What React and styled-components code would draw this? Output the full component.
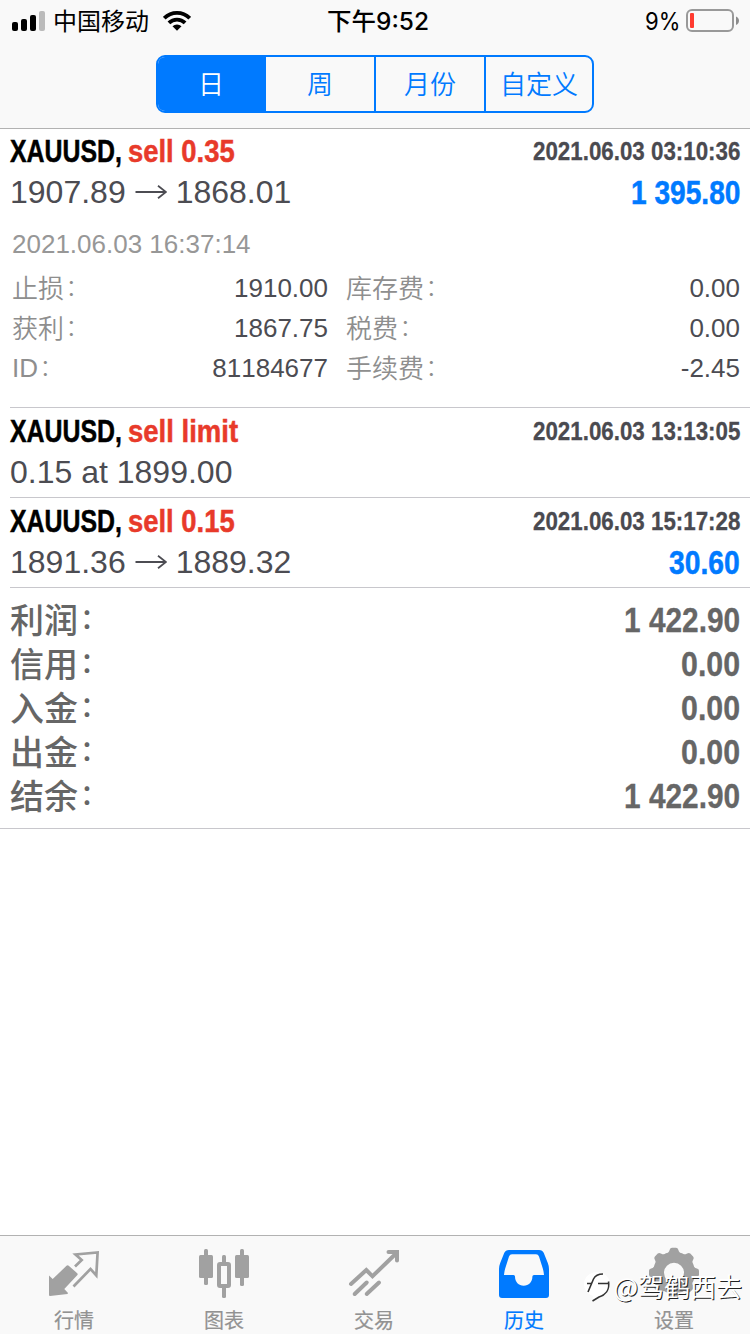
import { useLayoutEffect, useRef, useState } from "react";
import styled, { createGlobalStyle } from "styled-components";

const GlobalStyle = createGlobalStyle`
  * {
    box-sizing: border-box;
  }
  body {
    margin: 0;
    background: #fff;
    font-family: "Liberation Sans", "Noto Sans CJK SC", sans-serif;
    font-kerning: none;
  }
`;

const Screen = styled.div`
  display: flex;
  flex-direction: column;
  width: 750px;
  height: 1334px;
  overflow: hidden;
  background: #fff;
`;

const TopBar = styled.header`
  display: flex;
  flex-direction: column;
  align-items: center;
  height: 129px;
  background: #f9f9f9;
  border-bottom: 1px solid #b2b2b2;
`;

const StatusBar = styled.div`
  display: grid;
  grid-template-columns: 1fr auto 1fr;
  align-items: center;
  width: 100%;
  height: 40px;
  margin-bottom: 15px;
  padding: 0 11px 0 12px;
  font-family: Inter, "Noto Sans CJK SC", sans-serif;
  font-size: 24px;
  line-height: 40px;
  color: #000;
`;

const StatusGroup = styled.div`
  display: flex;
  align-items: center;
  justify-content: ${(props) => (props.$end ? "flex-end" : "flex-start")};
`;

const StatusText = styled.div`
  display: flex;
  padding-top: 2px;
  line-height: 40px;
`;

const Carrier = styled(StatusText)`
  margin: 0 14px 0 8px;
`;

const Charge = styled(StatusText)`
  margin-right: 6px;
`;

const Clock = styled(StatusText)`
  padding-left: 5px;
  font-weight: 500;
`;

const Segments = styled.div`
  display: grid;
  grid-template-columns: 106px 110px 110px 108px;
  width: 438px;
  height: 58px;
  border: 2px solid #007aff;
  border-radius: 9px;
  background: #f9f9f9;
  overflow: hidden;
`;

const Segment = styled.button`
  padding: 0 0 3px;
  border: 0;
  border-left: ${(props) => (props.$first ? "0" : "2px solid #007aff")};
  background: ${(props) => (props.$active ? "#007aff" : "transparent")};
  color: ${(props) => (props.$active ? "#fff" : "#007aff")};
  font-family: "Noto Sans CJK SC", sans-serif;
  font-size: 26px;
  font-weight: 350;
  line-height: 51px;
  white-space: nowrap;
`;

const Content = styled.main`
  flex: 1 0 auto;
`;

const Deal = styled.section`
  height: ${(props) => (props.$open ? 280 : 90)}px;
  margin-top: ${(props) => (props.$open ? -1 : 0)}px;
  margin-left: 10px;
  padding-right: 10px;
  border-bottom: 1px solid #c8c7cc;
`;

const DealLine = styled.div`
  display: flex;
  justify-content: space-between;
  height: ${(props) => props.$height}px;
  line-height: ${(props) => props.$height}px;
`;

const Title = styled.div`
  display: flex;
  gap: 6px;
  font-size: 32px;
  font-weight: 700;
  color: #000;
  -webkit-text-stroke: 0.5px currentColor;
`;

const Side = styled.span`
  color: #e83a2a;
`;

const DealTime = styled.div`
  font-size: 26px;
  font-weight: 700;
  color: #4a4a50;
  -webkit-text-stroke: 0.3px currentColor;
`;

const Prices = styled.div`
  display: flex;
  align-items: center;
  padding-top: 2px;
  font-size: 32px;
  color: #4c4c52;
`;

const Profit = styled.div`
  padding-top: 1px;
  font-size: 33px;
  font-weight: 700;
  color: #007aff;
  -webkit-text-stroke: 0.5px currentColor;
`;

const Arrow = styled.svg`
  width: 32px;
  height: 20px;
  margin: 0 9px;
`;

const CloseTime = styled.div`
  margin-top: 15px;
  padding-left: 2px;
  font-size: 26px;
  line-height: 40px;
  color: #979797;
`;

const Details = styled.dl`
  display: grid;
  grid-template-columns: 150px 168px 150px 1fr;
  grid-auto-rows: 40px;
  margin: 4px 0 0;
  font-size: 26px;
  line-height: 40px;
`;

const DetailLabel = styled.dt`
  display: flex;
  padding-top: ${(props) => (props.$latin ? 0 : 1)}px;
  padding-left: ${(props) => (props.$second ? 18 : 2)}px;
  font-weight: 350;
  color: #8e8e8e;
`;

const DetailValue = styled.dd`
  margin: 0;
  text-align: right;
  color: #4c4c52;
`;

const Colon = styled.span`
  margin-top: -${(props) => props.$lift}px;
  padding-left: 2px;
  font-size: 0.82em;
`;

const Summary = styled.section`
  padding: 10px 10px;
  border-bottom: 1px solid #c8c7cc;
`;

const SummaryRow = styled.div`
  display: flex;
  justify-content: space-between;
  height: 44px;
  line-height: 44px;
  font-size: 34px;
  color: #666;
`;

const SummaryLabel = styled.span`
  display: flex;
  padding-top: 1px;
  font-weight: 500;
`;

const SummaryValue = styled.span`
  font-size: 35px;
  font-weight: 700;
  -webkit-text-stroke: 0.3px currentColor;
`;

const TabBar = styled.nav`
  position: relative;
  display: flex;
  height: 99px;
  background: #f9f9f9;
  border-top: 1px solid #b2b2b2;
`;

const Tab = styled.a`
  display: flex;
  flex: 1 1 0;
  flex-direction: column;
  align-items: center;
  padding: 11px 2px 0 0;
  font-family: "Noto Sans CJK SC", sans-serif;
  font-size: 20px;
  line-height: 24px;
  color: ${(props) => (props.$active ? "#007aff" : "#929292")};
  -webkit-text-stroke: 0.2px currentColor;

  svg {
    width: 60px;
    height: 52px;
    margin-bottom: 9px;
    color: ${(props) => (props.$active ? "#007aff" : "#a1a1a1")};
  }
`;

const Watermark = styled.div`
  position: absolute;
  right: 8px;
  top: 31px;
  display: flex;
  align-items: center;
  font-family: "Noto Sans CJK SC", sans-serif;
  font-size: 26px;
  line-height: 38px;
  color: #fff;
  text-shadow: 1px 1px 0 #222;

  svg {
    width: 30px;
    height: 34px;
  }
`;

const FitBox = styled.span`
  display: inline-block;
  width: ${(props) => props.$width}px;
  white-space: nowrap;
`;

const FitInner = styled.span`
  display: inline-block;
  transform-origin: 0 50%;
`;

// Condenses a line of text to the given width
function Fit({ width, children }) {
  const inner = useRef(null);
  const [scale, setScale] = useState(1);

  useLayoutEffect(() => {
    setScale(width / inner.current.offsetWidth);
  }, [width, children]);

  return (
    <FitBox $width={width}>
      <FitInner ref={inner} style={{ transform: `scaleX(${scale})` }}>
        {children}
      </FitInner>
    </FitBox>
  );
}

const segments = ["日", "周", "月份", "自定义"];

const deals = [
  {
    side: "sell 0.35",
    sideWidth: 107,
    time: "2021.06.03 03:10:36",
    from: "1907.89",
    to: "1868.01",
    profit: "1 395.80",
    profitWidth: 109,
    closeTime: "2021.06.03 16:37:14",
    details: [
      ["止损", "1910.00", "库存费", "0.00"],
      ["获利", "1867.75", "税费", "0.00"],
      ["ID", "81184677", "手续费", "-2.45"],
    ],
  },
  {
    side: "sell limit",
    sideWidth: 110,
    time: "2021.06.03 13:13:05",
    note: "0.15 at 1899.00",
  },
  {
    side: "sell 0.15",
    sideWidth: 107,
    time: "2021.06.03 15:17:28",
    from: "1891.36",
    to: "1889.32",
    profit: "30.60",
    profitWidth: 71,
  },
];

const summary = [
  ["利润", "1 422.90", 116],
  ["信用", "0.00", 59],
  ["入金", "0.00", 59],
  ["出金", "0.00", 59],
  ["结余", "1 422.90", 116],
];

function SignalIcon() {
  return (
    <svg width="33" height="20" viewBox="0 0 33 20">
      <rect x="0" y="11" width="6" height="9" rx="2" />
      <rect x="9" y="8" width="6" height="12" rx="2" />
      <rect x="18" y="4" width="6" height="16" rx="2" />
      <rect x="27" y="0" width="6" height="20" rx="2" fill="#bbb" />
    </svg>
  );
}

function WifiIcon() {
  return (
    <svg width="28" height="20" viewBox="0 0 28 20">
      <g fill="none" stroke="#000" strokeWidth="3.8">
        <path d="M1.3 7.2a18 18 0 0 1 25.4 0" />
        <path d="M5.9 11.9a11.5 11.5 0 0 1 16.2 0" />
      </g>
      <path d="M14 19.8l-4.500-4.500a6.300 6.300 0 0 1 9 0z" />
    </svg>
  );
}

function BatteryIcon() {
  return (
    <svg width="53" height="24" viewBox="0 0 53 24">
      <rect x="1" y="1" width="46" height="21" rx="5" fill="none" stroke="#999" strokeWidth="2" />
      <rect x="4" y="4" width="4" height="15" rx="1" fill="#ff3b30" />
      <path d="M50 7.500c4 1.500 4 7 0 8.500z" fill="#8c8c8c" />
    </svg>
  );
}

function QuotesIcon() {
  return (
    <svg viewBox="0 0 60 52">
      <path
        d="M5 28.500L8.700 32L22.500 18.800Q23.700 17.700 25 18.900L33.200 26.200Q34.200 27.200 33.200 28.300L20.300 42L24 46L23.500 47L6 49Q5 49 5 48z"
        fill="currentColor"
      />
      <path
        d="M31 19.500L37.700 13L31.500 7.500L53.600 5.400L52.300 28.500L46.500 22L29.500 39.500"
        fill="none"
        stroke="currentColor"
        strokeWidth="2.700"
      />
    </svg>
  );
}

function ChartIcon() {
  return (
    <svg viewBox="0 0 60 52" fill="currentColor">
      <rect x="5" y="8" width="14" height="23" rx="1.500" />
      <rect x="10" y="2" width="4" height="36" rx="1.500" />
      <rect x="41" y="8" width="14" height="23" rx="1.500" />
      <rect x="46" y="2" width="4" height="37" rx="1.500" />
      <rect x="25" y="17" width="10" height="22" rx="1" fill="none" stroke="currentColor" strokeWidth="4" />
      <rect x="28" y="8" width="4" height="9" rx="1.500" />
      <rect x="28" y="39" width="4" height="12" rx="1.500" />
    </svg>
  );
}

function TradeIcon() {
  return (
    <svg viewBox="0 0 60 52" fill="none" stroke="currentColor" strokeWidth="4" strokeLinecap="round">
      <path d="M7 37L22.300 23L28.500 29.300L52 6.500" />
      <path d="M44.500 5H53V13.500" />
      <path d="M10.700 47L22.700 35.500" />
      <path d="M22.700 47L35 35.500" />
    </svg>
  );
}

function HistoryIcon() {
  return (
    <svg viewBox="0 0 60 52" fill="currentColor">
      <path
        fillRule="evenodd"
        d="M15 3H45Q48.500 3 49.800 6L53.800 16Q55 19 55 22V48Q55 51 52 51H8Q5 51 5 48V22Q5 19 6.200 16L10.200 6Q11.500 3 15 3zM18 7.300Q15.800 7.300 15 9.500L11.200 21.500Q10.300 24.500 10 28H19.500Q21 28 21 29.500C21 35 24.700 38.800 29.700 38.800S38.400 35 38.400 29.500Q38.400 28 40 28H50Q49.700 24.500 48.800 21.500L45 9.500Q44.200 7.300 42 7.300z"
      />
    </svg>
  );
}

function SettingsIcon() {
  const teeth = [0, 45, 90, 135, 180, 225, 270, 315];
  return (
    <svg viewBox="0 0 60 52">
      <circle cx="30" cy="25.700" r="15.500" fill="none" stroke="currentColor" strokeWidth="11" />
      {teeth.map((angle) => (
        <path
          key={angle}
          d="M21 8Q25 6 25.700 2.800Q26.200 0.700 28 0.700H32Q33.800 0.700 34.300 2.800Q35 6 39 8z"
          fill="currentColor"
          transform={`rotate(${angle} 30 25.700)`}
        />
      ))}
    </svg>
  );
}

const tabs = [
  { label: "行情", Icon: QuotesIcon },
  { label: "图表", Icon: ChartIcon },
  { label: "交易", Icon: TradeIcon },
  { label: "历史", Icon: HistoryIcon },
  { label: "设置", Icon: SettingsIcon },
];

function DealRow({ deal }) {
  return (
    <Deal $open={!!deal.details}>
      <DealLine $height={46}>
        <Title>
          <Fit width={112}>XAUUSD,</Fit>
          <Side>
            <Fit width={deal.sideWidth}>{deal.side}</Fit>
          </Side>
        </Title>
        <DealTime>
          <Fit width={207}>{deal.time}</Fit>
        </DealTime>
      </DealLine>
      <DealLine $height={35}>
        {deal.note ? (
          <Prices>{deal.note}</Prices>
        ) : (
          <Prices>
            {deal.from}
            <Arrow viewBox="0 0 32 20" fill="none" stroke="currentColor" strokeWidth="1.800">
              <path d="M0.500 9H31M23 2.700L31 9L23 15.300" />
            </Arrow>
            {deal.to}
          </Prices>
        )}
        {deal.profit && (
          <Profit>
            <Fit width={deal.profitWidth}>{deal.profit}</Fit>
          </Profit>
        )}
      </DealLine>
      {deal.details && (
        <>
          <CloseTime>{deal.closeTime}</CloseTime>
          <Details>
            {deal.details.map(([label, value, label2, value2]) => [
              <DetailLabel key={label} $latin={label === "ID"}>
                {label}
                <Colon $lift={label === "ID" ? 0 : 1}>：</Colon>
              </DetailLabel>,
              <DetailValue key={label + value}>{value}</DetailValue>,
              <DetailLabel key={label2} $second>
                {label2}
                <Colon $lift={1}>：</Colon>
              </DetailLabel>,
              <DetailValue key={label2 + value2}>{value2}</DetailValue>,
            ])}
          </Details>
        </>
      )}
    </Deal>
  );
}

export default function App() {
  const [period, setPeriod] = useState(0);

  return (
    <Screen>
      <GlobalStyle />
      <TopBar>
        <StatusBar>
          <StatusGroup>
            <SignalIcon />
            <Carrier>
              <Fit width={96}>中国移动</Fit>
            </Carrier>
            <WifiIcon />
          </StatusGroup>
          <Clock>
            <Fit width={102}>下午9:52</Fit>
          </Clock>
          <StatusGroup $end>
            <Charge>
              <Fit width={35}>9%</Fit>
            </Charge>
            <BatteryIcon />
          </StatusGroup>
        </StatusBar>
        <Segments>
          {segments.map((name, i) => (
            <Segment key={name} $first={i === 0} $active={i === period} onClick={() => setPeriod(i)}>
              {name}
            </Segment>
          ))}
        </Segments>
      </TopBar>
      <Content>
        {deals.map((deal) => (
          <DealRow key={deal.time} deal={deal} />
        ))}
        <Summary>
          {summary.map(([label, value, width]) => (
            <SummaryRow key={label}>
              <SummaryLabel>
                {label}
                <Colon $lift={1}>：</Colon>
              </SummaryLabel>
              <SummaryValue>
                <Fit width={width}>{value}</Fit>
              </SummaryValue>
            </SummaryRow>
          ))}
        </Summary>
      </Content>
      <TabBar>
        {tabs.map(({ label, Icon }) => (
          <Tab key={label} $active={label === "历史"}>
            <Icon />
            {label}
          </Tab>
        ))}
        <Watermark>
          <svg viewBox="0 0 30 34">
            <path d="M14 3C21 3 27 8 27 15C27 22 23 27 16 28L9 32L10 27C4 25 1 20 1 15C1 8 7 3 14 3z" fill="#fff" />
            <g fill="none" stroke="#333" strokeWidth="1.600">
              <path d="M5 23L10.500 10Q13 5 20 5" />
              <path d="M4 14.500H9M15 14.500H25" />
              <path d="M25.500 12.500C27 21 22 26 16 28L9.500 32" />
            </g>
          </svg>
          @驾鹤西去
        </Watermark>
      </TabBar>
    </Screen>
  );
}
